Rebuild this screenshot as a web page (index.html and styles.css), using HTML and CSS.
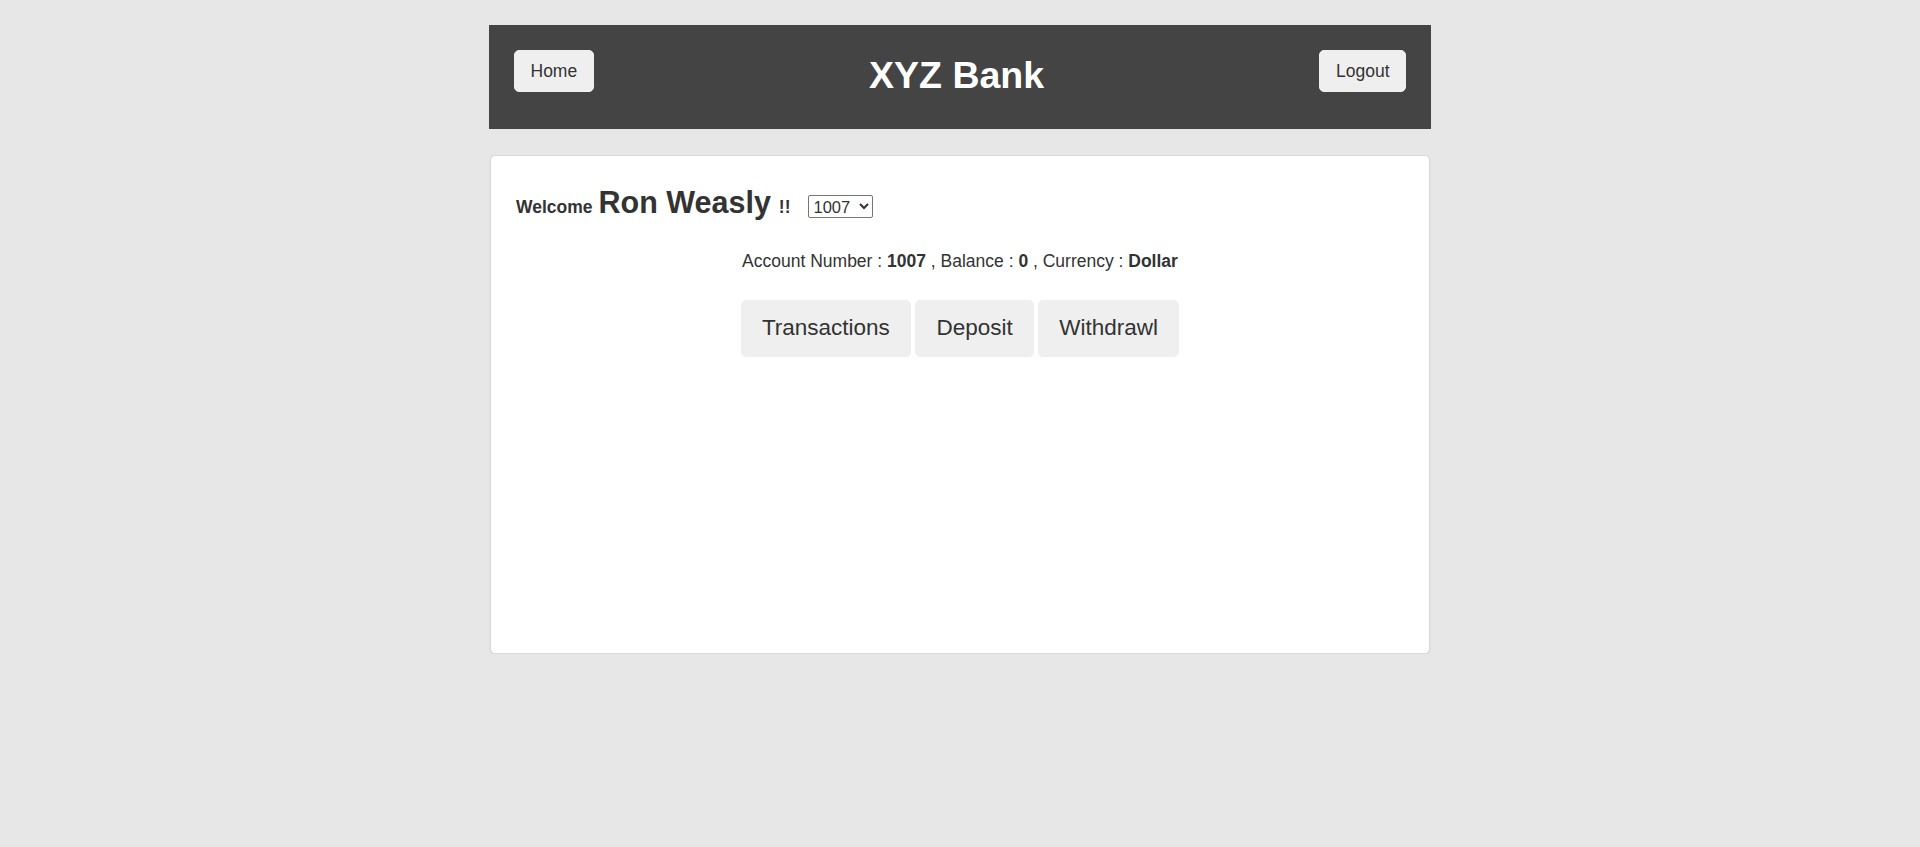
FILE: index.html
```html
<!DOCTYPE html>
<html>
<head>
<meta charset="utf-8">
<title>XYZ Bank</title>
<link rel="stylesheet" href="styles.css">
</head>
<body>
<div class="container">
  <header class="topbar">
    <button class="btn nav-btn">Home</button>
    <h1 class="title">XYZ Bank</h1>
    <button class="btn nav-btn">Logout</button>
  </header>
  <main class="card">
    <div class="welcome">
      <strong class="welcome-label">Welcome</strong>
      <span class="name">Ron Weasly</span>
      <strong class="bang">!!</strong>
      <select class="account-select">
        <option>1007</option>
        <option>1008</option>
        <option>1009</option>
      </select>
    </div>
    <div class="account-info">
      Account Number : <strong>1007</strong> , Balance : <strong>0</strong> , Currency : <strong>Dollar</strong>
    </div>
    <div class="actions">
      <button class="btn btn-lg">Transactions</button>
      <button class="btn btn-lg">Deposit</button>
      <button class="btn btn-lg">Withdrawl</button>
    </div>
  </main>
</div>
</body>
</html>
```

FILE: styles.css
```css
html, body {
  margin: 0;
  padding: 0;
}

body {
  background: #e7e7e7;
  font-family: "Liberation Sans", Arial, sans-serif;
  font-size: 17.5px;
  line-height: 25px;
  color: #333;
}

.container {
  width: 942px;
  margin: 25px auto 0;
}

.topbar {
  background: #444444;
  display: flex;
  justify-content: space-between;
  align-items: flex-start;
  padding: 25px 25px 25px;
}

.title {
  margin: 4.7px 0 8px;
  font-size: 37.5px;
  line-height: 41.25px;
  font-weight: bold;
  color: #ffffff;
}

.btn {
  font-family: "Liberation Sans", Arial, sans-serif;
  color: #333;
  background: #efefef;
  border: 1.25px solid #efefef;
  border-radius: 5px;
  cursor: pointer;
  margin: 0;
}

.nav-btn {
  font-size: 17.5px;
  line-height: 25px;
  padding: 7.5px 15.5px;
}

.card {
  margin: 26px 1px 0;
  background: #ffffff;
  border: 1px solid #d9d9d9;
  border-radius: 5px;
  box-shadow: 0 1px 2px rgba(0, 0, 0, 0.08);
  box-sizing: border-box;
  height: 499px;
  padding: 30px 25px;
}

.welcome {
  display: flex;
  align-items: baseline;
  line-height: 33px;
}

.welcome-label {
  font-size: 17.5px;
}

.name {
  font-size: 30.5px;
  font-weight: bold;
  margin-left: 6px;
}

.bang {
  font-size: 17.5px;
  margin-left: 8px;
}

.account-select {
  margin-left: 17px;
  width: 65px;
  height: 23px;
  font-family: "Liberation Sans", Arial, sans-serif;
  font-size: 16.5px;
  color: #333;
  background: #fff;
  border: 1px solid #767676;
  border-radius: 2px;
  padding: 0 1px;
}

.account-info {
  margin-top: 25px;
  text-align: center;
}

.actions {
  margin-top: 26px;
  display: flex;
  justify-content: center;
  gap: 4.6px;
}

.btn-lg {
  font-size: 22.5px;
  line-height: 30px;
  padding: 12.5px 20px;
}
```
